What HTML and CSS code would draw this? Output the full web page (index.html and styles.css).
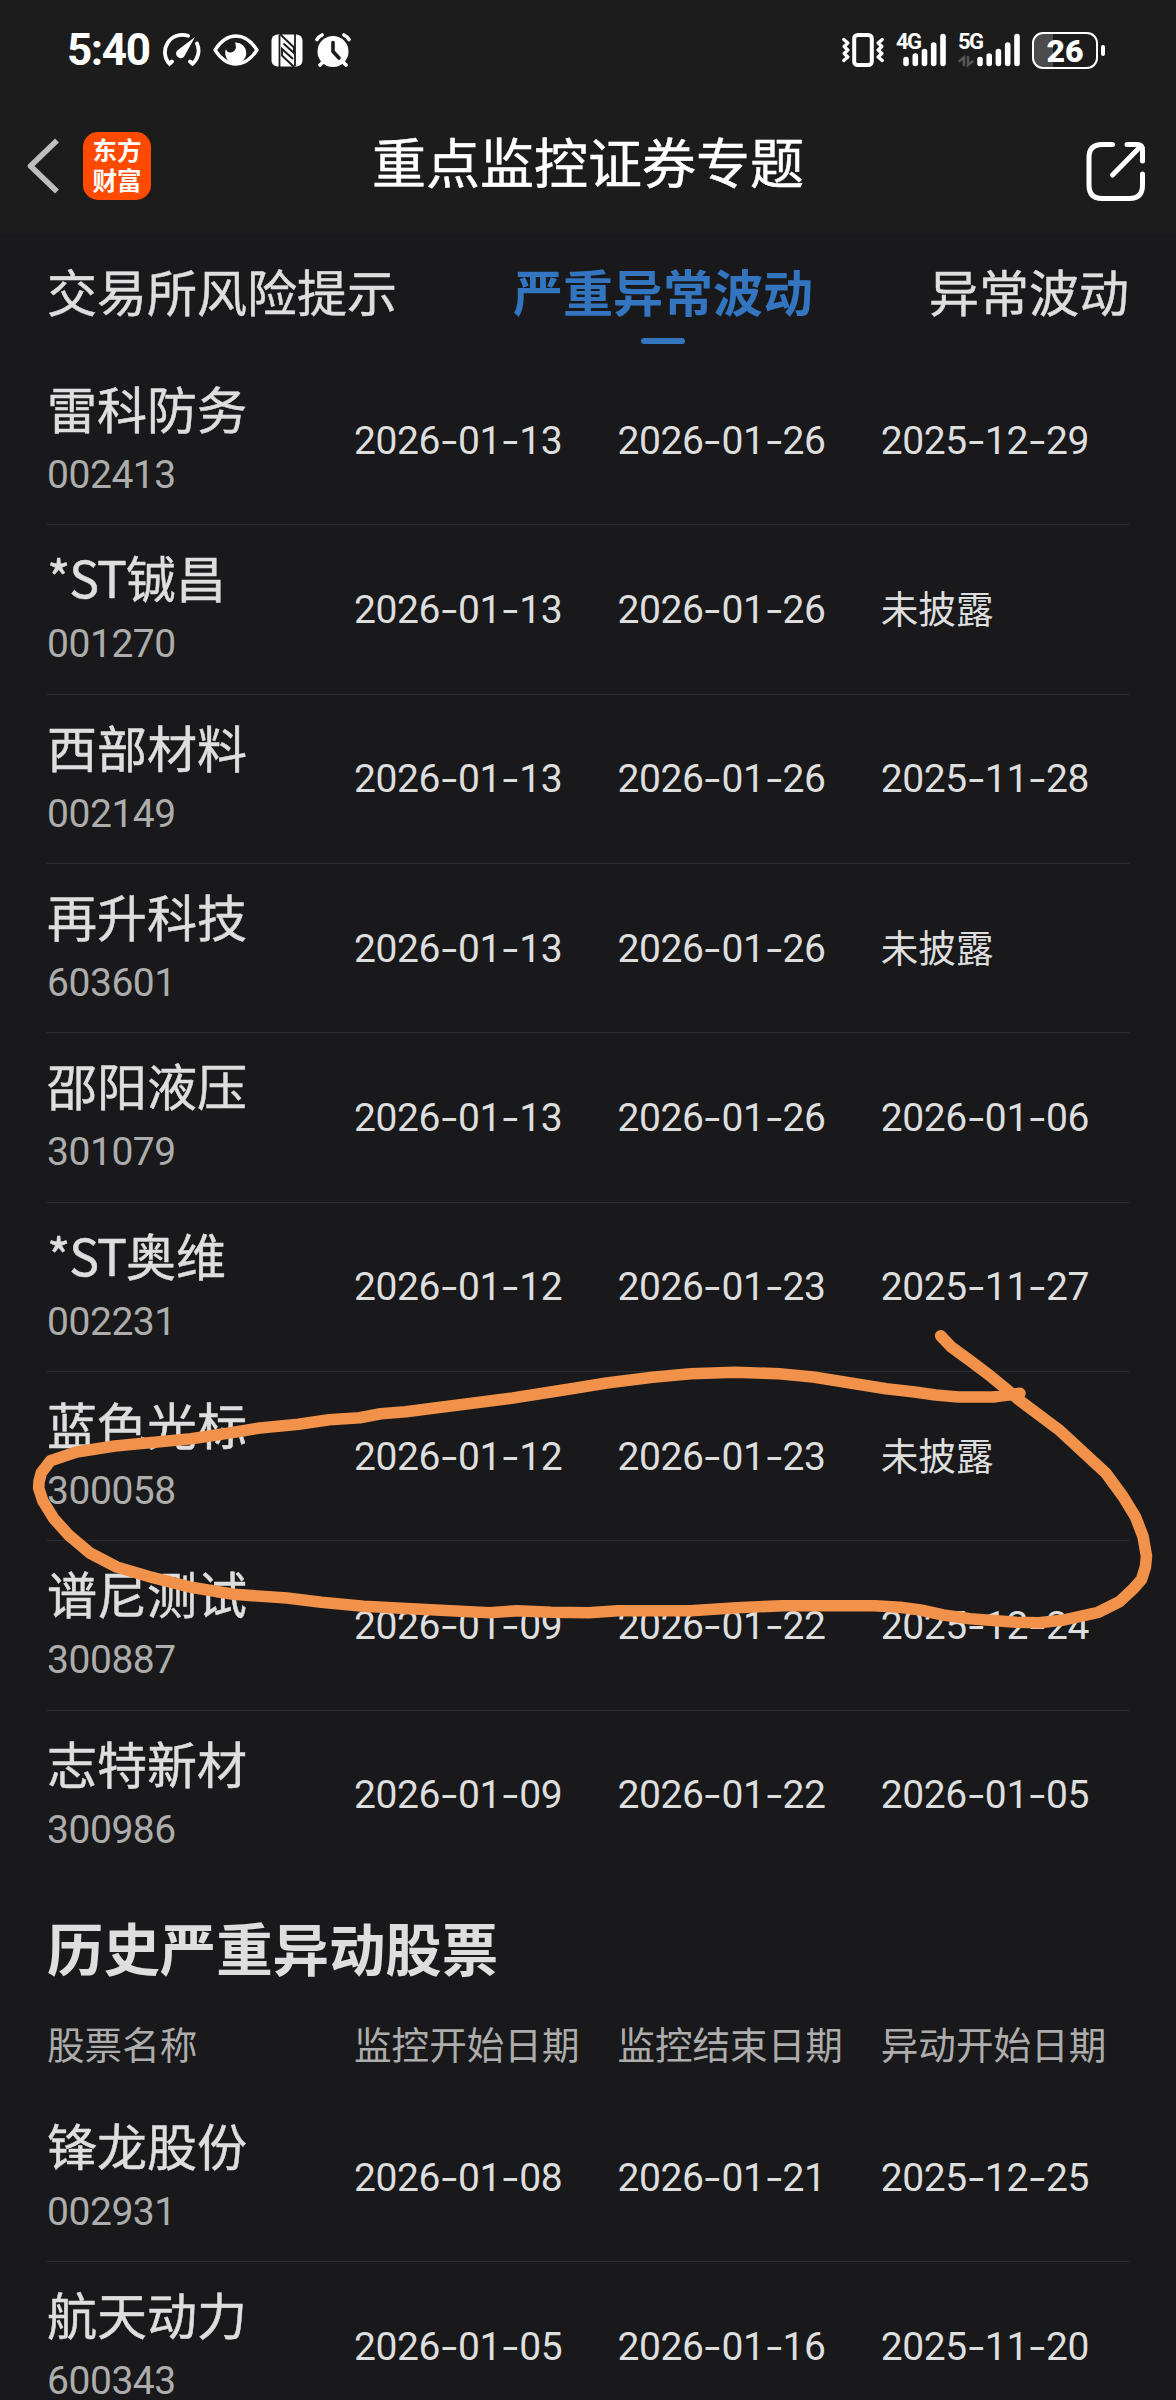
FILE: index.html
```html
<!DOCTYPE html>
<html lang="zh-CN">
<head>
<meta charset="utf-8">
<title>重点监控证券专题</title>
<link rel="stylesheet" href="styles.css">
</head>
<body>
<div class="screen">
  <header class="top">
    <div class="status">
      <div class="status-side">
        <span class="clock">5:40</span>
        <svg class="i-gauge" width="40" height="36" viewBox="0 0 40 36" fill="none" stroke="#fff" stroke-width="3.800" stroke-linecap="round"><path d="M27 3.800A17.300 17.300 0 0 0 8.500 31.800L11 29.500M36 11.500A17.300 17.300 0 0 1 31.500 31.800L29 29.500"/><path d="M34 5L24 23A4.600 4.600 0 1 1 17.500 17.500Z" fill="#fff" stroke="none"/></svg>
        <svg class="i-eye" width="46" height="32" viewBox="0 0 46 32"><path d="M2 16Q11 2 23 2T44 16Q35 30 23 30T2 16Z" fill="none" stroke="#fff" stroke-width="3.300" stroke-linejoin="round"/><path d="M22 8.500A10.500 10.500 0 1 1 13 15Q14 19 18 18.500Q25 17 22 8.500Z" fill="#fff"/></svg>
        <svg class="i-nfc" width="32" height="33" viewBox="0 0 32 33"><rect x=".5" y=".5" width="31" height="32" rx="6" fill="#fff"/><path d="M8.500 33V1M24 32V0" fill="none" stroke="#1c1c1c" stroke-width="1.800"/><path d="M9 0L23 13.500V19L12.500 9.500M23 33L11 21.500V15L22 25" fill="none" stroke="#1c1c1c" stroke-width="1.900"/></svg>
        <svg class="i-alarm" width="36" height="34" viewBox="0 0 36 34"><circle cx="18" cy="18.500" r="15.500" fill="#fff"/><path d="M2 6.500Q4 3.500 7 2M34 6.500Q32 3.500 29 2M8 29L5 32M28 29L31 32" stroke="#fff" stroke-width="3.600" stroke-linecap="round" fill="none"/><path d="M18 9.500V18.500L24 25" fill="none" stroke="#1c1c1c" stroke-width="3.600" stroke-linecap="round" stroke-linejoin="round"/></svg>
      </div>
      <div class="status-side">
        <svg class="i-vibrate" width="42" height="34" viewBox="0 0 42 34" fill="none" stroke="#fff" stroke-linecap="round" stroke-linejoin="round"><rect x="12.200" y="2" width="17.600" height="30" rx="3.500" stroke-width="4"/><path d="M1.800 6.500L5.800 10L2.200 13.500L5.800 17L2.200 20.500L5.800 24L1.800 27.500M40.200 6.500L36.200 10L39.800 13.500L36.200 17L39.800 20.500L36.200 24L40.200 27.500" stroke-width="3.400"/></svg>
        <div class="signal">
          <span class="net">4G</span>
          <svg width="43" height="34" viewBox="0 0 43 34" stroke="#fff" stroke-width="5.600" stroke-linecap="round"><path d="M3 26.500V30.500M12.300 23V30.500M21.500 18.500V30.500M30.700 12V30.500M40 3.500V30.500"/></svg>
        </div>
        <div class="signal signal-5g">
          <span class="net">5G</span>
          <svg width="62" height="34" viewBox="0 0 62 34" stroke="#fff" stroke-width="5.600" stroke-linecap="round"><path d="M22 26.500V30.500M31.200 23V30.500M40.400 18.500V30.500M49.700 12V30.500M59 3.500V30.500"/><path d="M1.500 28L6 24.500V32M10 24V32L14.500 28.500" stroke="#555" stroke-width="2.600" fill="none"/></svg>
        </div>
        <div class="battery"><span class="battery-body">26</span><span class="battery-tip"></span></div>
      </div>
    </div>
    <div class="nav">
      <svg class="back" width="34" height="56" viewBox="0 0 34 56" fill="none" stroke="#bebebe" stroke-width="5.600"><path d="M31 2.500L4.500 28L31 53.500" stroke-linejoin="round"/></svg>
      <div class="logo">东方<br>财富</div>
      <h1 class="title">重点监控证券专题</h1>
      <svg class="share" width="60" height="61" viewBox="0 0 60 61" fill="none" stroke="#fff" stroke-width="5" stroke-linecap="round" stroke-linejoin="round"><path d="M26.500 3.500H16Q3 3.500 3 16.500V44Q3 57.500 16 57.500H43.500Q56.500 57.500 56.500 44V33M41 3.500H51Q56.500 3.500 56.500 9V20M54.500 5.500L26.500 34"/></svg>
    </div>
  </header>
  <nav class="tabs">
    <span class="tab">交易所风险提示</span>
    <span class="tab tab-on">严重异常波动</span>
    <span class="tab">异常波动</span>
  </nav>
  <main class="list" id="current"></main>
  <h2 class="section-title">历史严重异动股票</h2>
  <div class="head"><span>股票名称</span><span>监控开始日期</span><span>监控结束日期</span><span>异动开始日期</span></div>
  <main class="list" id="history"></main>
  <svg class="ink" width="1176" height="2400" viewBox="0 0 1176 2400" fill="none" stroke="#f2924a" stroke-width="11.600" stroke-linecap="round" stroke-linejoin="round"><path d="M940.700 1335.700L951 1346.700L970.200 1360.700L991.200 1376.700L1006.500 1389.300L1019.900 1400.700L1060 1430.700L1106 1473.300L1123.200 1496.700L1135.400 1516.700L1143.100 1536.700L1146.500 1556L1145.400 1567L1141.600 1579.300L1132.800 1589.300L1119.400 1601.700L1098.300 1612.300L1062 1620.300L1039 1622.700L1016 1622.300L970.100 1618.700L943.300 1615L920.400 1610L900 1607.300L874.500 1605.700H782.600L736.700 1607.700L690.800 1610.700H618L589 1612.700L551 1612.300L516.600 1610.700L489.800 1612.700L420.900 1609.300L363.500 1606.300L321.400 1602.300L287 1598L233.400 1594.300L191.300 1587.300L153 1577.700L116.700 1567L89.900 1553L68.900 1535.300L53.600 1518.300L42.900 1501L38.700 1488.300L39 1481.700L41.300 1472.700L50.500 1460.700L76.500 1452L114.800 1446L191.300 1438.700L237.300 1431.700L260 1428L298.500 1424.300L329.100 1419.700L359.700 1417.700L380.800 1413.700L405.600 1411.700L512.800 1398L576 1388L606.600 1383L652.500 1377.300L690.800 1373.700L734.800 1372.300L778.800 1373.700L813.300 1377L886 1388.700L912.700 1391.700L935.700 1395L958.700 1397H993L1020 1393.300"/></svg>
</div>
<script src="app.js"></script>
</body>
</html>
```
FILE: styles.css
```css
* { box-sizing: border-box; }
html, body { margin: 0; background: #19191b; }
body {
  width: 1176px;
  height: 2400px;
  overflow: hidden;
  color: #dedede;
  font-family: "Noto Sans CJK SC", sans-serif;
}
.screen { position: relative; width: 1176px; height: 2400px; overflow: hidden; }
h1, h2 { margin: 0; }
svg { display: block; flex: none; }

.top { height: 234px; background: #1c1c1c; color: #fff; }
.status {
  display: flex;
  justify-content: space-between;
  height: 100px;
  padding: 0 71px 0 67px;
}
.status-side { display: flex; align-items: center; }
.clock {
  width: 94px;
  font: 700 44px/100px Roboto, sans-serif;
  letter-spacing: -1.4px;
}
.i-eye { margin-left: 12px; }
.i-nfc { margin-left: 12px; }
.i-alarm { margin-left: 12px; }
.signal { position: relative; margin-left: 19px; }
.signal-5g { margin-left: 12px; }
.net {
  position: absolute;
  left: -7px;
  top: -1px;
  font: 700 22px/20px Roboto, sans-serif;
  letter-spacing: -1.500px;
}
.signal-5g .net { left: 0; }
.battery { display: flex; align-items: center; gap: 3px; margin-left: 12px; }
.battery-body {
  width: 66px;
  height: 37px;
  border: 2.500px solid #fff;
  border-radius: 11px;
  background: linear-gradient(90deg, #4c4c4c 19px, transparent 19px);
  font: 900 32px/34px Roboto, sans-serif;
  text-align: center;
}
.battery-tip { width: 4px; height: 11px; border-radius: 2px; background: #fff; }

.nav {
  display: flex;
  height: 134px;
  padding: 0 30px 0 26px;
}
.back { margin-top: 38px; }
.logo {
  width: 68px;
  height: 68px;
  margin: 32px 0 0 23px;
  padding-top: 3px;
  border-radius: 15px;
  background: #ff4a00;
  font-size: 24.500px;
  font-weight: 700;
  line-height: 30px;
  text-align: center;
}
.title {
  width: 436px;
  margin-left: 221px;
  font-size: 54px;
  font-weight: 400;
  line-height: 122px;
  white-space: nowrap;
  -webkit-text-stroke: .5px;
}
.share { margin: 41px 0 0 auto; }

.tabs {
  display: flex;
  justify-content: space-between;
  height: 122px;
  padding: 0 47px;
  font-size: 50px;
  line-height: 112px;
}
.tab { -webkit-text-stroke: .5px; }
.tab-on {
  display: flex;
  flex-direction: column;
  align-items: center;
  color: #3375bf;
  font-weight: 700;
  -webkit-text-stroke: 0;
}
.tab-on::after {
  content: "";
  width: 44px;
  height: 6px;
  margin-top: -8px;
  border-radius: 3px;
  background: #3375bf;
}

.row, .head {
  display: grid;
  grid-template-columns: 307px 263.400px 263.400px 248px;
  margin-left: 47px;
  width: 1082px;
}
.row {
  height: 169.340px;
  border-bottom: 1.500px solid #2f2f31;
  align-items: center;
}
.list .row:last-child { border-bottom-color: transparent; }
.name {
  display: block;
  font-size: 50px;
  line-height: 66px;
  white-space: nowrap;
  -webkit-text-stroke: .5px;
}
.latin { letter-spacing: -1px; }
.code {
  display: block;
  color: #adadad;
  font: 400 39px/62px Roboto, sans-serif;
  letter-spacing: -.450px;
  padding-top: 4px;
}
.date {
  font: 37.600px/56px Roboto, "Noto Sans CJK SC", sans-serif;
  white-space: nowrap;
  padding-top: 1px;
}
.digits { font-size: 39px; letter-spacing: -.400px; }
.dash {
  display: inline-block;
  width: 18px;
  text-align: center;
  transform: scaleX(1.450);
}
.section-title {
  height: 136px;
  padding-left: 47px;
  font-size: 56.400px;
  font-weight: 700;
  line-height: 134px;
}
.head {
  height: 77px;
  color: #adadad;
  font-size: 37.600px;
  line-height: 54px;
}
.ink { position: absolute; left: 0; top: 0; }
```
FILE: app.js
```js
const current = [
  ["雷科防务", "002413", "2026-01-13", "2026-01-26", "2025-12-29"],
  ["*ST铖昌", "001270", "2026-01-13", "2026-01-26", "未披露"],
  ["西部材料", "002149", "2026-01-13", "2026-01-26", "2025-11-28"],
  ["再升科技", "603601", "2026-01-13", "2026-01-26", "未披露"],
  ["邵阳液压", "301079", "2026-01-13", "2026-01-26", "2026-01-06"],
  ["*ST奥维", "002231", "2026-01-12", "2026-01-23", "2025-11-27"],
  ["蓝色光标", "300058", "2026-01-12", "2026-01-23", "未披露"],
  ["谱尼测试", "300887", "2026-01-09", "2026-01-22", "2025-12-24"],
  ["志特新材", "300986", "2026-01-09", "2026-01-22", "2026-01-05"]
];
const past = [
  ["锋龙股份", "002931", "2026-01-08", "2026-01-21", "2025-12-25"],
  ["航天动力", "600343", "2026-01-05", "2026-01-16", "2025-11-20"]
];

function dateCell(value) {
  if (!value.includes("-")) return `<span class="date">${value}</span>`;
  return `<span class="date digits">${value.replace(/-/g, '<span class="dash">-</span>')}</span>`;
}

function nameCell(name) {
  return name.replace("*ST", '<span class="latin">*ST</span>');
}

function fill(id, rows) {
  document.getElementById(id).innerHTML = rows.map(([name, code, ...dates]) =>
    `<div class="row"><div><span class="name">${nameCell(name)}</span><span class="code">${code}</span></div>${dates.map(dateCell).join("")}</div>`
  ).join("");
}

fill("current", current);
fill("history", past);
```
